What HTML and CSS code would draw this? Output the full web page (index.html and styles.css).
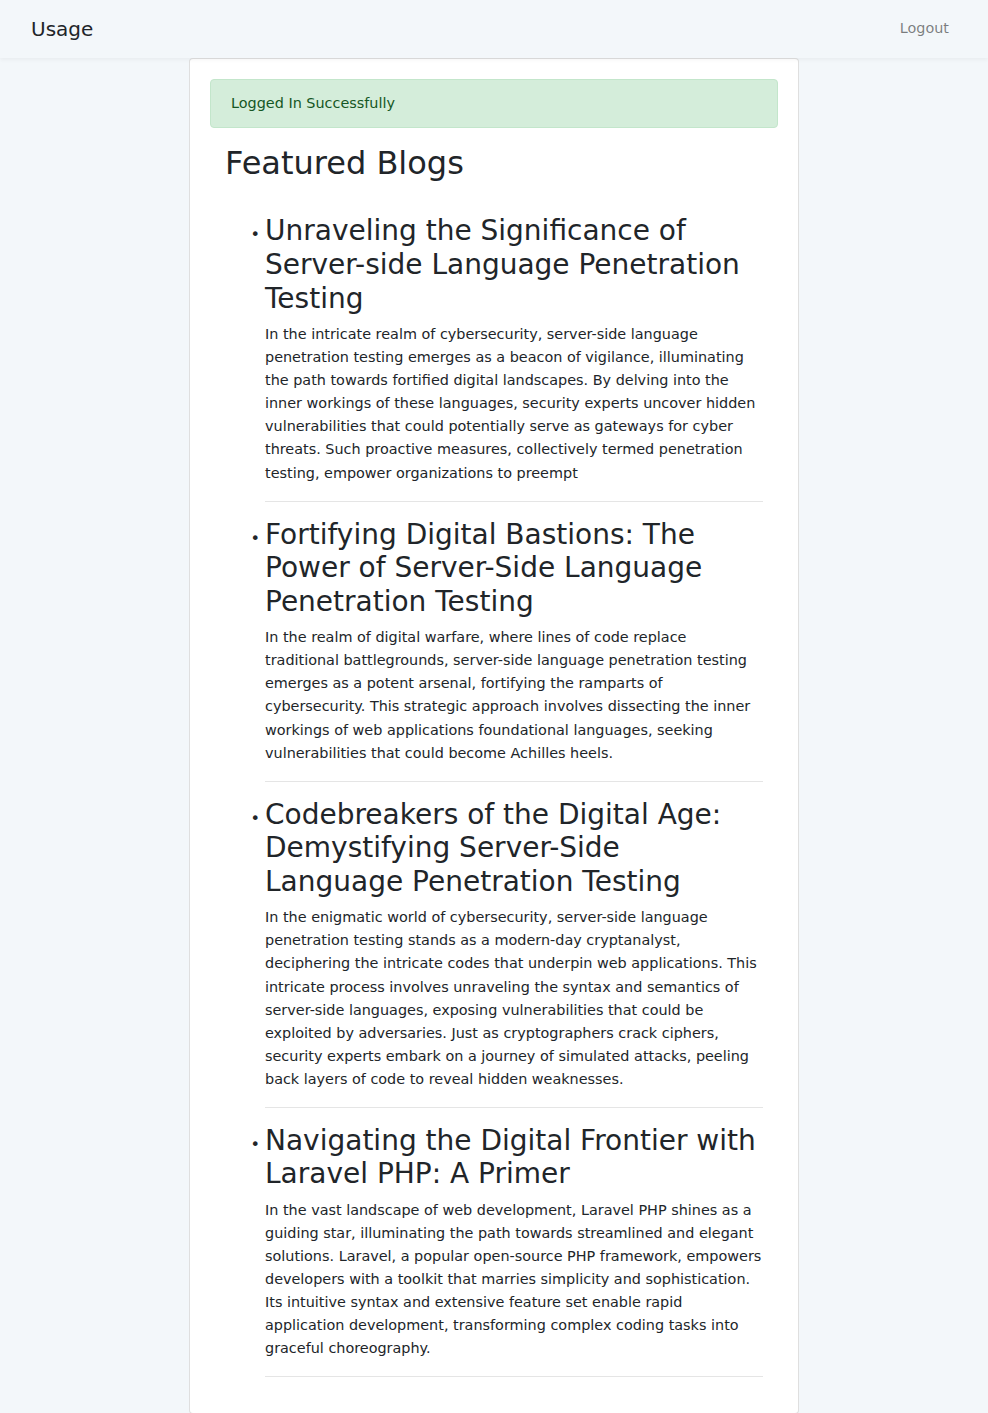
FILE: index.html
```html
<!DOCTYPE html>
<html lang="en">
<head>
<meta charset="utf-8">
<title>Usage</title>
<link rel="stylesheet" href="styles.css">
</head>
<body>
<nav class="navbar">
  <a class="brand" href="#">Usage</a>
  <a class="nav-link" href="#">Logout</a>
</nav>
<main class="main">
  <div class="card">
    <div class="card-body">
      <div class="alert">Logged In Successfully</div>
      <div class="content">
        <h2 class="page-title">Featured Blogs</h2>
        <ul class="blog-list">
          <li class="blog">
            <h3 class="blog-title">Unraveling the Significance of Server-side Language Penetration Testing</h3>
            <p class="blog-text">In the intricate realm of cybersecurity, server-side language penetration testing emerges as a beacon of vigilance, illuminating the path towards fortified digital landscapes. By delving into the inner workings of these languages, security experts uncover hidden vulnerabilities that could potentially serve as gateways for cyber threats. Such proactive measures, collectively termed penetration testing, empower organizations to preempt</p>
            <hr class="divider">
          </li>
          <li class="blog">
            <h3 class="blog-title">Fortifying Digital Bastions: The Power of Server-Side Language Penetration Testing</h3>
            <p class="blog-text">In the realm of digital warfare, where lines of code replace traditional battlegrounds, server-side language penetration testing emerges as a potent arsenal, fortifying the ramparts of cybersecurity. This strategic approach involves dissecting the inner workings of web applications foundational languages, seeking vulnerabilities that could become Achilles heels.</p>
            <hr class="divider">
          </li>
          <li class="blog">
            <h3 class="blog-title">Codebreakers of the Digital Age: Demystifying Server-Side Language Penetration Testing</h3>
            <p class="blog-text">In the enigmatic world of cybersecurity, server-side language penetration testing stands as a modern-day cryptanalyst, deciphering the intricate codes that underpin web applications. This intricate process involves unraveling the syntax and semantics of server-side languages, exposing vulnerabilities that could be exploited by adversaries. Just as cryptographers crack ciphers, security experts embark on a journey of simulated attacks, peeling back layers of code to reveal hidden weaknesses.</p>
            <hr class="divider">
          </li>
          <li class="blog">
            <h3 class="blog-title">Navigating the Digital Frontier with Laravel PHP: A Primer</h3>
            <p class="blog-text">In the vast landscape of web development, Laravel PHP shines as a guiding star, illuminating the path towards streamlined and elegant solutions. Laravel, a popular open-source PHP framework, empowers developers with a toolkit that marries simplicity and sophistication. Its intuitive syntax and extensive feature set enable rapid application development, transforming complex coding tasks into graceful choreography.</p>
            <hr class="divider">
          </li>
        </ul>
      </div>
    </div>
  </div>
</main>
</body>
</html>
```
FILE: styles.css
```css
* { box-sizing: border-box; }

html, body {
  margin: 0;
  padding: 0;
}

body {
  background: #f3f7fa;
  color: #212529;
  font-family: "DejaVu Sans", "Liberation Sans", sans-serif;
  font-size: 14.4px;
  line-height: 1.6;
}

a { text-decoration: none; }

.navbar {
  height: 58px;
  padding: 0 31px;
  display: flex;
  align-items: center;
  justify-content: space-between;
  background: #f3f7fa;
  box-shadow: 0 2px 4px rgba(0, 0, 0, 0.045);
  position: relative;
  z-index: 1;
}

.brand {
  color: #212529;
  font-size: 20px;
  line-height: 1.5;
}

.nav-link {
  color: rgba(0, 0, 0, 0.5);
  font-size: 14.4px;
  padding: 8px;
}

.main {
  display: flex;
  justify-content: center;
}

.card {
  width: 610px;
  background: #fff;
  border: 1px solid rgba(0, 0, 0, 0.125);
  border-radius: 4px;
}

.card-body {
  padding: 20px;
}

.alert {
  background: #d4edda;
  border: 1px solid #c3e6cb;
  color: #155724;
  border-radius: 4px;
  padding: 12px 20px;
  margin-bottom: 16px;
}

.content {
  padding: 0 15px;
}

.page-title {
  font-size: 32px;
  font-weight: 400;
  line-height: 1.2;
  margin: 0 0 32px;
}

.blog-list {
  margin: 0;
  padding-left: 40px;
}

.blog::marker {
  content: "\2022  ";
  font-size: 16px;
}

.blog-title {
  font-size: 28px;
  font-weight: 400;
  line-height: 1.2;
  margin: 0 0 8px;
}

.blog-text {
  margin: 0 0 16px;
}

.divider {
  border: 0;
  border-top: 1px solid rgba(0, 0, 0, 0.1);
  margin: 16px 0;
}
```
